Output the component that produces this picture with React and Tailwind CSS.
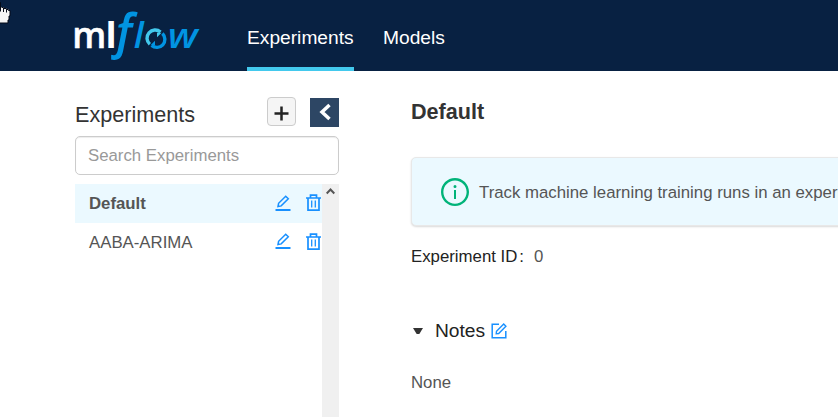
import { AiOutlineInfoCircle } from "react-icons/ai";

function Logo() {
  return (
    <svg width="130" height="62" viewBox="72 4 130 62" className="block" aria-label="mlflow">
      <g fontFamily="'Open Sans', sans-serif">
        <text x="72.200" y="48" fontSize="36" fontWeight="600" fill="#fff" stroke="#fff" strokeWidth=".5" textLength="34" lengthAdjust="spacingAndGlyphs">m</text>
        <text x="105.400" y="48" fontSize="36.500" fontWeight="700" fill="#fff">l</text>
        <g fill="#0194e2" fontStyle="italic" fontWeight="600">
          <text x="111.500" y="47.500" fontSize="50" textLength="26" lengthAdjust="spacingAndGlyphs">ƒ</text>
          <text x="133.800" y="48" fontSize="36.500">l</text>
          <text x="167.800" y="48" fontSize="35" textLength="30" lengthAdjust="spacingAndGlyphs">w</text>
        </g>
      </g>
      <g fill="none" strokeWidth="3.400">
        <path d="M149.800 44.300A8 8 0 0 1 160.500 32" stroke="#43c9ed" />
        <path d="M162.400 33.600A8 8 0 0 1 151.600 45.400" stroke="#0194e2" />
      </g>
      <path d="M157 37.200v-4.500h4.500z" fill="#43c9ed" />
      <path d="M155 40.800v4.500h-4.500z" fill="#0194e2" />
    </svg>
  );
}

function HandCursor() {
  return (
    <svg width="12" height="25" viewBox="0 0 12 25" className="absolute left-0 top-0" aria-hidden="true">
      <path d="M0 3h1v4h3v1h3v1h2v2h1v5h-1v4h-1v3H0z" fill="#f5f5f5" />
      <path d="M0 2.500h.5v9M1.500 7.500h2v4.500M3.500 8.500h3v4M6.500 9.500h2v1h1.500v5.500h-1v4h-1v3H0" fill="none" stroke="#050b18" />
    </svg>
  );
}

function EditIcon() {
  return (
    <svg width="16" height="16" viewBox="0 0 16 16" fill="none" stroke="#1890ff" className="block">
      <path d="M.5 15h15" strokeWidth="2" />
      <path d="M3 11.500l.6-3.200 7.100-7.100 2.600 2.600-7.100 7.100z" strokeWidth="1.500" />
    </svg>
  );
}

function TrashIcon() {
  return (
    <svg width="15" height="17" viewBox="0 0 15 17" fill="none" stroke="#1890ff" strokeWidth="1.700" className="block">
      <path d="M0 4h15M4.500 4V1.200h6V4M2 4v12.100h11V4" />
      <path d="M5.700 6.500v7M9.300 6.500v7" strokeWidth="1.300" />
    </svg>
  );
}

function FormIcon() {
  return (
    <svg width="16" height="16" viewBox="0 0 16 16" fill="none" stroke="#1890ff" className="block">
      <path d="M8 1.200H1.200v13.600h13.600V8" strokeWidth="1.500" />
      <path d="M5.200 10.800l.3-2.500 7.200-7.200 2.200 2.200-7.200 7.200z" strokeWidth="1.400" />
    </svg>
  );
}

function ExperimentRow({ name, active }) {
  return (
    <div className={active ? "flex h-[39px] items-center bg-[#ebf9ff] pl-[14px] font-bold" : "flex h-[38px] items-center pl-[14px]"}>
      <span className={active ? "flex-1" : "flex-1 pt-[2px]"}>{name}</span>
      <span className="mr-[15px] mb-[2px]"><EditIcon /></span>
      <span className="mr-px mb-[2px]"><TrashIcon /></span>
    </div>
  );
}

export default function App() {
  return (
    <div className="relative flex h-[417px] w-[838px] flex-col overflow-hidden bg-white font-['Liberation_Sans',Arial,sans-serif] text-[16.8px] text-[#555]">
      <header className="flex h-[71px] shrink-0 bg-[#082142] pl-[72px]">
        <div className="pt-1"><Logo /></div>
        <nav className="ml-[45px] flex text-[19.2px] leading-[22px] text-white">
          <a className="h-[71px] w-[107px] border-b-4 border-[#43c9ed] pt-[27px] whitespace-nowrap">Experiments</a>
          <a className="ml-[29px] pt-[27px]">Models</a>
        </nav>
      </header>
      <div className="flex min-h-0 flex-1">
        <aside className="ml-[75px] flex w-[264px] shrink-0 flex-col">
          <div className="flex h-[65px] pt-[26px]">
            <h1 className="flex-1 pt-[5px] text-[21.6px] leading-[25px] text-[#333]">Experiments</h1>
            <button className="flex h-[29px] w-[29px] items-center justify-center rounded border border-[#ccc] bg-[#f5f5f5]">
              <svg width="15" height="15" viewBox="0 0 15 15" className="mt-[3px]"><path d="M.5 7.500h14M7.500.5v14" stroke="#222" strokeWidth="2.500" /></svg>
            </button>
            <button className="mt-px ml-[14px] flex h-[29px] w-[29px] items-center justify-center bg-[#2d4664]">
              <svg width="12" height="18" viewBox="0 0 12 18" className="mb-px"><path d="M10.500 2L3 9l7.500 7" fill="none" stroke="#fff" strokeWidth="3.500" /></svg>
            </button>
          </div>
          <input className="h-[39px] w-full shrink-0 rounded-[5px] border border-[#ccc] px-3 text-[16.8px] shadow-[inset_0_1px_1px_rgba(0,0,0,0.075)] placeholder:text-[#999]" placeholder="Search Experiments" />
          <div className="mt-[9px] flex flex-1">
            <div className="flex-1">
              <ExperimentRow name="Default" active />
              <ExperimentRow name="AABA-ARIMA" />
            </div>
            <div className="w-[17px] bg-[#f0f0f0] pt-[4px] pl-1">
              <svg width="9" height="7" viewBox="0 0 9 7" className="block"><path d="M.7 5.500l3.800-4 3.800 4" fill="none" stroke="#555" strokeWidth="2" /></svg>
            </div>
          </div>
        </aside>
        <main className="ml-[72px] flex w-[427px] flex-col">
          <h2 className="mt-[28px] text-[21.6px] leading-[25px] font-bold text-[#333]">Default</h2>
          <div className="mt-[33px] flex h-[69px] w-[450px] items-center rounded-[5px] border border-[#e8e8e8] bg-[#ebf9ff] pl-[27px] shadow-[0_1px_2px_rgba(0,0,0,0.15)]">
            <AiOutlineInfoCircle className="h-[32px] w-[32px] shrink-0 text-[#00b379]" />
            <span className="mt-[2px] ml-[8px] whitespace-nowrap">Track machine learning training runs in an experiment.</span>
          </div>
          <div className="mt-[21px] flex leading-[20px]">
            <span className="text-[#222]">Experiment ID</span>
            <span className="ml-[2px] text-[#222]">:</span>
            <span className="ml-[10px]">0</span>
          </div>
          <div className="mt-[52px] flex h-[24px] items-center">
            <svg width="10" height="7" viewBox="0 0 10 7" className="ml-[2px]"><path d="M0 0h10L6.300 6H3.700z" fill="#333" /></svg>
            <span className="ml-[12px] text-[19.2px] leading-[24px] text-[#222]">Notes</span>
            <span className="ml-[6px]"><FormIcon /></span>
          </div>
          <div className="mt-[30px] leading-[20px]">None</div>
        </main>
      </div>
      <HandCursor />
    </div>
  );
}
